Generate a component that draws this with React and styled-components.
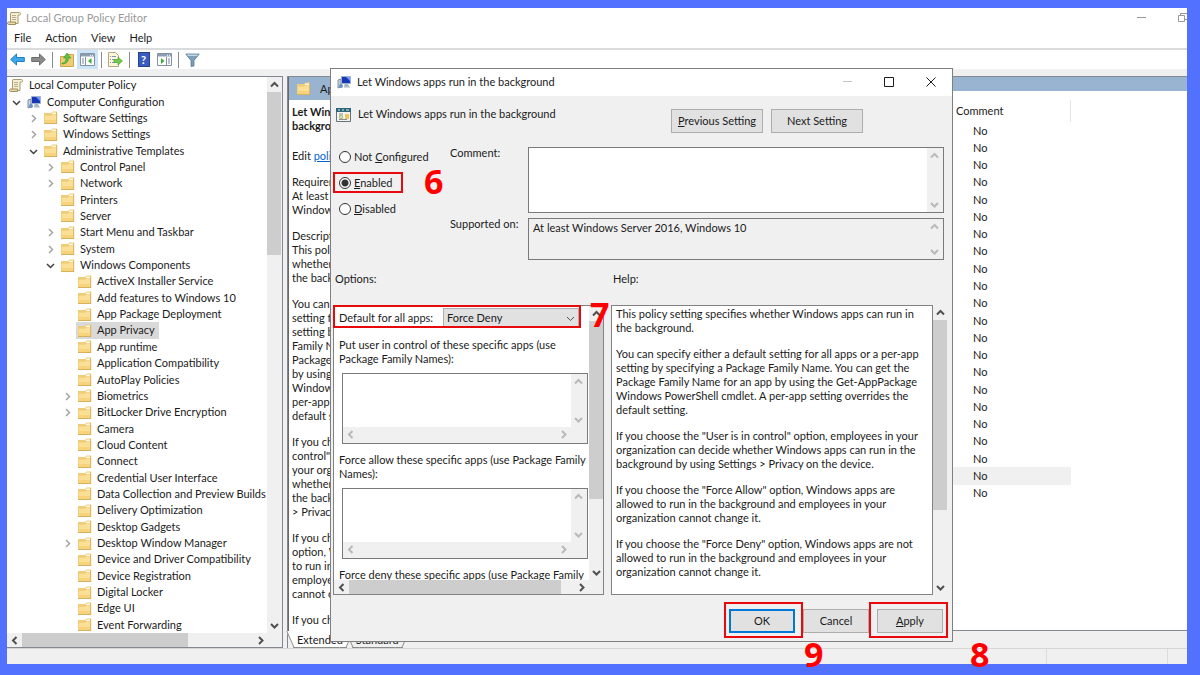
import React from "react";
import styled, { createGlobalStyle, css } from "styled-components";

const GlobalStyle = createGlobalStyle`
  * {
    box-sizing: border-box;
  }
  body {
    margin: 0;
    background: #5271ff;
    color: #1b1b1b;
    font-family: Lato, "Open Sans", sans-serif;
    font-size: 11px;
    line-height: 14px;
  }
  button, select, textarea {
    font: inherit;
    color: inherit;
  }
`;

/* ---------- window frame ---------- */

const Frame = styled.div`
  height: 100vh;
  min-height: 480px;
  padding: 8px 13px 11px 7px;
`;

const Window = styled.div`
  position: relative;
  display: flex;
  flex-direction: column;
  height: 100%;
  background: #f0f0f0;
`;

const TitleBar = styled.header`
  display: flex;
  align-items: center;
  gap: 4px;
  height: 20px;
  background: #fff;
  color: #999;
`;

const WindowControls = styled.div`
  display: flex;
  gap: 32px;
  margin-left: auto;
`;

const GlyphButton = styled.button`
  display: flex;
  padding: 0;
  border: 0;
  background: none;
`;

const MenuBar = styled.nav`
  display: flex;
  align-items: center;
  gap: 14px;
  height: 20px;
  padding-left: 7px;
  background: #fff;
`;

const MenuItem = styled.button`
  padding: 0;
  border: 0;
  background: none;
`;

const Toolbar = styled.div`
  display: flex;
  align-items: center;
  height: 21px;
  border-top: 2px solid #dadbdc;
  background: #fff;
`;

const ToolButton = styled.button`
  display: flex;
  align-items: center;
  justify-content: center;
  width: 21px;
  height: 19px;
  padding: 0;
  border: 0;
  background: ${p => (p.$active ? "#cce4f7" : "none")};
`;

const ToolDivider = styled.span`
  width: 1px;
  height: 16px;
  margin: 0 3px;
  background: #8c8c8c;
`;

const Panes = styled.div`
  display: flex;
  flex: 1;
  gap: 4px;
  min-height: 0;
  padding-top: 7px;
`;

const StatusBar = styled.footer`
  display: flex;
  justify-content: flex-end;
  height: 16px;
  border-top: 1px solid #d7d7d7;
`;

const StatusCell = styled.span`
  width: ${p => p.$width}px;
  border-left: 1px solid #dcdcdc;
`;

/* ---------- scroll bars ---------- */

const Bar = styled.div`
  display: flex;
  flex-direction: ${p => (p.$horizontal ? "row" : "column")};
  justify-content: space-between;
  flex: none;
  ${p => (p.$horizontal ? "height" : "width")}: ${p => p.$size}px;
  padding-right: ${p => (p.$horizontal ? p.$size : 0)}px;
  background: #f0f0f0;
`;

const BarArrow = styled.span`
  display: flex;
  align-items: center;
  justify-content: center;
  flex: none;
  width: 15px;
  height: 15px;
  color: ${p => (p.$muted ? "#b9b9b9" : "#505050")};
`;

const Track = styled.span`
  display: flex;
  flex: 1;
  flex-direction: inherit;
  min-height: 0;
`;

const Thumb = styled.span`
  flex: none;
  align-self: stretch;
  flex-basis: ${p => p.$length};
  background: #cdcdcd;
`;

const CHEVRONS = {
  up: "M1 6.5 4.5 3 8 6.5",
  down: "M1 3 4.5 6.5 8 3",
  left: "M6.5 1 3 4.5 6.5 8",
  right: "M3 1 6.5 4.5 3 8"
};

const Chevron = ({ to, weight = 2 }) => (
  <svg width="9" height="9" viewBox="0 0 9 9" fill="none" aria-hidden="true">
    <path d={CHEVRONS[to]} stroke="currentColor" strokeWidth={weight} />
  </svg>
);

const ScrollBar = ({ horizontal, thumb, size = 14, muted }) => (
  <Bar $horizontal={horizontal} $size={size} aria-hidden="true">
    <BarArrow $muted={muted}>
      <Chevron to={horizontal ? "left" : "up"} />
    </BarArrow>
    <Track>{thumb && <Thumb $length={thumb} />}</Track>
    <BarArrow $muted={muted}>
      <Chevron to={horizontal ? "right" : "down"} />
    </BarArrow>
  </Bar>
);

/* ---------- icons ---------- */

const FolderIcon = () => (
  <svg width="14" height="13" viewBox="0 0 14 13" aria-hidden="true">
    <path d="M0 2h7l1.500-1.500H13V13H0z" fill="#efcd78" />
    <path d="M8.500 1.500h3.800v1.600H7.500z" fill="#fff9e4" />
    <path d="M.8 4.800H7l1.500-1.300h4V12H.8z" fill="#fbdf96" />
    <path d="M.8 9h11.700v3H.8z" fill="#f7d47c" />
    <path d="M0 12.500h13M12.700 1v12" stroke="#d0aa58" strokeWidth=".8" />
  </svg>
);

const ScrollIcon = () => (
  <svg width="15" height="15" viewBox="0 0 15 15" aria-hidden="true">
    <path d="M4 1.500h8.500c1.500 0 1.500 2.500 0 2.500H11v8.500H3.500V3z" fill="#f7efd2" stroke="#a89a70" />
    <path d="M1.500 11h7v2.500h-7c-1.300 0-1.300-2.500 0-2.500z" fill="#e8d9a8" stroke="#a08f5f" />
    <path d="M5 4.500h4M5 6.500h4M5 8.500h4" stroke="#b9ad8a" />
  </svg>
);

const ComputerIcon = () => (
  <svg width="15" height="14" viewBox="0 0 15 14" aria-hidden="true">
    <path d="M1 5l3-1v8l-3 1z" fill="#c8d2dc" stroke="#7f8fa0" />
    <path d="M4.500 1.500h9v7h-9z" fill="#1736b8" stroke="#9fb2cf" />
    <path d="M9 2h4v4z" fill="#6f9cf0" />
    <path d="M7.500 9h3.500l2 3.500H7z" fill="#a9b6c6" />
    <circle cx="4" cy="11" r="2" fill="#6b8fc4" />
  </svg>
);

const PolicyIcon = () => (
  <svg width="15" height="15" viewBox="0 0 15 15" aria-hidden="true">
    <path d="M.5 1.500h14v13H.5z" fill="#f4f4ee" stroke="#64737f" />
    <path d="M0 1h15v4H0z" fill="#2d6478" />
    <path d="M2 3h2M6 3h2M10 3h3" stroke="#dfeef5" />
    <path d="M3 7h4M3 12.500h8" stroke="#8b8b8b" />
    <circle cx="5" cy="10" r="2.200" fill="#a8bf8d" />
    <circle cx="5" cy="10" r=".8" fill="#fff" />
    <path d="M9 7h4v5H9z" fill="#ecc55c" />
  </svg>
);

const ArrowIcon = ({ color, edge, flip }) => (
  <svg width="15" height="13" viewBox="0 0 15 13" aria-hidden="true">
    <path
      d={flip ? "M14.300 6.500 8.500 1v3.500H.7v4h7.800V12z" : "M.7 6.500 6.500 1v3.500h7.800v4H6.500V12z"}
      fill={color}
      stroke={edge}
    />
  </svg>
);

const FolderUpIcon = () => (
  <svg width="14" height="15" viewBox="0 0 14 15" aria-hidden="true">
    <path d="M.5 4.500h5l1-2h7v12H.5z" fill="#f0cd74" stroke="#cda64b" />
    <path d="M2 11c3 0 4-2 4-5H3.500L7 1l4 5H8.500c0 4-2.500 6-6.500 6z" fill="#5fc244" stroke="#3b962a" strokeWidth=".6" />
  </svg>
);

const TreePaneIcon = () => (
  <svg width="15" height="13" viewBox="0 0 15 13" aria-hidden="true">
    <path d="M.5.5h14v12H.5z" fill="#fff" stroke="#8592a3" />
    <path d="M1 1h13v2.500H1z" fill="#8d9db2" />
    <path d="M10 2.300h1M12 2.300h1" stroke="#fff" />
    <path d="M5.500 4v8" stroke="#8592a3" />
    <path d="M2 6h2M2 8h2M2 10h2" stroke="#7587a0" />
    <path d="M11.500 5v6L8 8z" fill="#3fae3a" />
  </svg>
);

const ActionPaneIcon = () => (
  <svg width="15" height="13" viewBox="0 0 15 13" aria-hidden="true">
    <path d="M.5.5h14v12H.5z" fill="#fff" stroke="#8592a3" />
    <path d="M1 1h13v2.500H1z" fill="#8d9db2" />
    <path d="M10 2.300h1M12 2.300h1" stroke="#fff" />
    <path d="M9.500 4v8" stroke="#8592a3" />
    <path d="M11 6h2M11 8h2M11 10h2" stroke="#7587a0" />
    <path d="M4 5v6l3.500-3z" fill="#3fae3a" />
  </svg>
);

const ExportIcon = () => (
  <svg width="15" height="15" viewBox="0 0 15 15" aria-hidden="true">
    <path d="M.5.5h7l3 3v11H.5z" fill="#fdf6df" stroke="#b7a878" />
    <path d="M2 4.500h1M4 4.500h4M2 7.500h1M4 7.500h3M2 10.500h1M4 10.500h3" stroke="#7f93b5" />
    <path d="M6 7.500h4V5l4.500 4-4.500 4v-2.500H6z" fill="#6fca45" stroke="#459c2c" strokeWidth=".6" />
  </svg>
);

const HelpBadge = styled.span`
  width: 12px;
  height: 15px;
  border: 1px solid #27408f;
  background: #3a5bc0;
  color: #fff;
  font-weight: 700;
  line-height: 13px;
  text-align: center;
`;

const FilterIcon = () => (
  <svg width="15" height="14" viewBox="0 0 15 14" aria-hidden="true">
    <path d="M.8 1h13.400L9 7.500V13l-3 .4V7.500z" fill="#7d9fb8" stroke="#5b7a92" strokeWidth=".8" />
    <path d="M2 1.500h11l-1 1.500H3z" fill="#c2d7e6" />
  </svg>
);

const MinimizeIcon = () => (
  <svg width="9" height="11" viewBox="0 0 9 11" aria-hidden="true">
    <path d="M0 4.500h9" stroke="currentColor" />
  </svg>
);

const MaximizeIcon = () => (
  <svg width="10" height="10" viewBox="0 0 10 10" fill="none" aria-hidden="true">
    <path d="M.5.5h9v9h-9z" stroke="currentColor" />
  </svg>
);

const CloseIcon = () => (
  <svg width="10" height="10" viewBox="0 0 10 10" fill="none" aria-hidden="true">
    <path d="M.5.5l9 9M9.500.5l-9 9" stroke="currentColor" />
  </svg>
);

const RestoreIcon = () => (
  <svg width="9" height="10" viewBox="0 0 9 10" fill="none" aria-hidden="true">
    <path d="M.5 2.500h6v6h-6zM2.500 2V.5H9M6.500 6.500H9" stroke="currentColor" />
  </svg>
);

/* ---------- tree ---------- */

const TreePane = styled.section`
  display: flex;
  flex: none;
  flex-direction: column;
  width: 276px;
  border: 1px solid #828790;
  border-left: 0;
`;

const TreeView = styled.div`
  display: flex;
  flex: 1;
  min-height: 0;
  padding-right: 1px;
`;

const TreeViewport = styled.div`
  display: flex;
  flex: 1;
  overflow: hidden;
  background: #fff;
`;

const TreeList = styled.ul`
  display: grid;
  flex: 1;
  grid-auto-rows: 1fr;
  margin: 0;
  padding: 0;
  list-style: none;
`;

const TreeRow = styled.li`
  display: flex;
  min-height: 0;
  padding-left: ${p => Math.max(p.$level - 1, 0) * 17}px;
  white-space: nowrap;
`;

const Twisty = styled.span`
  display: flex;
  align-items: center;
  justify-content: center;
  width: 18px;
  padding-top: 1px;
  color: ${p => (p.$open ? "#404040" : "#a6a6a6")};
`;

const TreeLabel = styled.span`
  display: flex;
  align-items: center;
  gap: 5px;
  padding: 0 4px 0 2px;
  background: ${p => (p.$selected ? "#d9d9d9" : "none")};
`;

const TREE = [
  [0, "Local Computer Policy", "", ScrollIcon],
  [1, "Computer Configuration", "open", ComputerIcon],
  [2, "Software Settings", "closed"],
  [2, "Windows Settings", "closed"],
  [2, "Administrative Templates", "open"],
  [3, "Control Panel", "closed"],
  [3, "Network", "closed"],
  [3, "Printers"],
  [3, "Server"],
  [3, "Start Menu and Taskbar", "closed"],
  [3, "System", "closed"],
  [3, "Windows Components", "open"],
  [4, "ActiveX Installer Service"],
  [4, "Add features to Windows 10"],
  [4, "App Package Deployment"],
  [4, "App Privacy"],
  [4, "App runtime"],
  [4, "Application Compatibility"],
  [4, "AutoPlay Policies"],
  [4, "Biometrics", "closed"],
  [4, "BitLocker Drive Encryption", "closed"],
  [4, "Camera"],
  [4, "Cloud Content"],
  [4, "Connect"],
  [4, "Credential User Interface"],
  [4, "Data Collection and Preview Builds"],
  [4, "Delivery Optimization"],
  [4, "Desktop Gadgets"],
  [4, "Desktop Window Manager", "closed"],
  [4, "Device and Driver Compatibility"],
  [4, "Device Registration"],
  [4, "Digital Locker"],
  [4, "Edge UI"],
  [4, "Event Forwarding"]
];

const PolicyTree = () => (
  <TreePane>
    <TreeView>
      <TreeViewport>
        <TreeList>
          {TREE.map(([level, name, state, Icon = FolderIcon]) => (
            <TreeRow key={name} $level={level}>
              {level > 0 && (
                <Twisty $open={state === "open"}>
                  {state && <Chevron to={state === "open" ? "down" : "right"} weight={1.5} />}
                </Twisty>
              )}
              <TreeLabel $selected={name === "App Privacy"}>
                <Icon />
                {name}
              </TreeLabel>
            </TreeRow>
          ))}
        </TreeList>
      </TreeViewport>
      <ScrollBar thumb="31%" />
    </TreeView>
    <ScrollBar horizontal thumb="72%" />
  </TreePane>
);

/* ---------- details ---------- */

const DetailsPane = styled.section`
  display: flex;
  flex: 1;
  flex-direction: column;
  min-width: 0;
  border-top: 1px solid #828790;
  border-left: 1px solid #828790;
`;

const DetailsBody = styled.div`
  display: flex;
  flex: 1;
  min-height: 0;
  background: #fff;
`;

const Extended = styled.div`
  width: 190px;
  overflow: hidden;
  border-left: 1px solid #696969;
`;

const ExtendedHeader = styled.div`
  display: flex;
  align-items: center;
  gap: 9px;
  height: 23px;
  padding-left: 8px;
  background: #99b4d1;
`;

const Description = styled.div`
  display: flex;
  flex-direction: column;
  gap: 12px;
  padding: 5px 3px;
  white-space: pre;

  h2 {
    margin: 0 0 4px;
    font-size: 11px;
  }
  p {
    margin: 0;
  }
  a {
    color: #0066cc;
  }
`;

const Listing = styled.div`
  flex: 1;
  border-bottom: 1px solid #828790;
`;

const ListingHeader = styled.div`
  height: 14px;
  background: #99b4d1;
`;

const SettingsTable = styled.table`
  width: 119px;
  height: 402px;
  margin: 9px 116px 0 auto;
  border-collapse: collapse;

  th {
    height: 22px;
    padding: 0 4px;
    border-right: 1px solid #e5e5e5;
    font-weight: 400;
    text-align: left;
  }
  td {
    padding: 0 21px;
  }
`;

const SettingRow = styled.tr`
  background: ${p => (p.$selected ? "#f0f0f0" : "none")};
`;

const Tabs = styled.div`
  display: flex;
  height: 17px;
  padding-left: 5px;
`;

const Tab = styled.button`
  position: relative;
  isolation: isolate;
  margin-right: 5px;
  padding: 2px 4px 0;
  border: 0;
  border-bottom: 1px solid #8c8c8c;
  background: ${p => (p.$active ? "#fff" : "#f0f0f0")};

  &::before,
  &::after {
    content: "";
    position: absolute;
    top: 0;
    bottom: -1px;
    width: 6px;
    border: 0 solid #8c8c8c;
    border-bottom-width: 1px;
    background: inherit;
    z-index: -1;
  }
  &::before {
    left: -3px;
    border-left-width: 1px;
    transform: skewX(24deg);
  }
  &::after {
    right: -3px;
    border-right-width: 1px;
    transform: skewX(-24deg);
  }
`;

const HELP = [
  "This policy setting specifies whether Windows apps can run in\nthe background.",
  "You can specify either a default setting for all apps or a per-app\nsetting by specifying a Package Family Name. You can get the\nPackage Family Name for an app by using the Get-AppPackage\nWindows PowerShell cmdlet. A per-app setting overrides the\ndefault setting.",
  "If you choose the \"User is in control\" option, employees in your\norganization can decide whether Windows apps can run in the\nbackground by using Settings > Privacy on the device.",
  "If you choose the \"Force Allow\" option, Windows apps are\nallowed to run in the background and employees in your\norganization cannot change it.",
  "If you choose the \"Force Deny\" option, Windows apps are not\nallowed to run in the background and employees in your\norganization cannot change it."
];

const DESCRIPTION = [
  "Requirements:\nAt least Windows Server 2016,\nWindows 10",
  "Description:\nThis policy setting specifies\nwhether Windows apps can run in\nthe background.",
  "You can specify either a default\nsetting for all apps or a per-app\nsetting by specifying a Package\nFamily Name. You can get the\nPackage Family Name for an app\nby using the Get-AppPackage\nWindows PowerShell cmdlet. A\nper-app setting overrides the\ndefault setting.",
  "If you choose the \"User is in\ncontrol\" option, employees in\nyour organization can decide\nwhether Windows apps can run in\nthe background by using Settings\n> Privacy on the device.",
  "If you choose the \"Force Allow\"\noption, Windows apps are allowed\nto run in the background and\nemployees in your organization\ncannot change it.",
  "If you choose the \"Force Deny\""
];

const Details = () => (
  <DetailsPane>
    <DetailsBody>
      <Extended>
        <ExtendedHeader>
          <FolderIcon />
          App Privacy
        </ExtendedHeader>
        <Description>
          <h2>{"Let Windows apps run in the\nbackground"}</h2>
          <p>
            Edit <a href="#policy">policy setting</a>
          </p>
          {DESCRIPTION.map(text => (
            <p key={text}>{text}</p>
          ))}
        </Description>
      </Extended>
      <Listing>
        <ListingHeader />
        <SettingsTable>
          <thead>
            <tr>
              <th scope="col">Comment</th>
            </tr>
          </thead>
          <tbody>
            {Array.from({ length: 22 }, (_, i) => (
              <SettingRow key={i} $selected={i === 20}>
                <td>No</td>
              </SettingRow>
            ))}
          </tbody>
        </SettingsTable>
      </Listing>
    </DetailsBody>
    <Tabs>
      <Tab $active>Extended</Tab>
      <Tab>Standard</Tab>
    </Tabs>
  </DetailsPane>
);

/* ---------- dialog ---------- */

const DialogWindow = styled.div`
  position: absolute;
  inset: 60px 234px 22px 323px;
  display: flex;
  flex-direction: column;
  border: 1px solid #7f7f7f;
  background: #f0f0f0;
`;

const DialogTitle = styled.header`
  display: flex;
  align-items: center;
  gap: 5px;
  height: 27px;
  padding: 0 16px 1px 6px;
  background: #fff;
`;

const DialogControls = styled.div`
  display: flex;
  align-items: center;
  gap: 32px;
  margin-left: auto;

  button:disabled {
    color: #c4c4c4;
  }
`;

const SettingHeader = styled.div`
  display: flex;
  justify-content: space-between;
  padding: 11px 89px 14px 5px;
`;

const SettingName = styled.div`
  display: flex;
  gap: 7px;
`;

const PushButton = styled.button`
  width: ${p => (p.$wide ? 92 : 66)}px;
  height: 24px;
  padding: 0;
  border: ${p => (p.$default ? "2px solid #0078d7" : "1px solid #adadad")};
  background: #e1e1e1;
  white-space: nowrap;
`;

const SettingNav = styled.div`
  display: flex;
  gap: 8px;
  padding-top: 2px;
`;

const StateForm = styled.div`
  display: grid;
  grid-template-columns: 111px 78px 1fr;
  grid-template-rows: 66px 42px;
  row-gap: 5px;
  padding: 0 8px;
`;

const FieldLabel = styled.label`
  margin-top: -1px;
`;

const RadioGroup = styled.fieldset`
  display: flex;
  flex-direction: column;
  align-items: flex-start;
  grid-row: span 2;
  gap: 6px;
  min-width: 0;
  margin: 0;
  padding: 0;
  border: 0;
`;

const RadioLabel = styled.label`
  position: relative;
  display: flex;
  align-items: center;
  gap: 3px;
  height: 20px;
  white-space: nowrap;
`;

const Radio = styled.input`
  width: 12px;
  height: 12px;
  margin: 0;
  border: 1px solid #333;
  border-radius: 50%;
  background: #fff;
  appearance: none;

  &:checked {
    border-color: #333;
    background: radial-gradient(#333 3px, #fff 4px);
  }
`;

const TextBox = styled.div`
  display: flex;
  flex-direction: column;
  border: 1px solid #7a7a7a;
  background: ${p => (p.$readOnly ? "#f0f0f0" : "#fff")};
`;

const TextBoxRow = styled.div`
  display: flex;
  flex: 1;
  min-height: 0;
`;

const TextInput = styled.textarea`
  flex: 1;
  min-width: 0;
  padding: 2px 4px;
  border: 0;
  background: none;
  outline: 0;
  overflow: hidden;
  resize: none;
`;

const Columns = styled.div`
  display: grid;
  flex: 1;
  grid-template-columns: minmax(0, 271fr) minmax(0, 336fr);
  grid-template-rows: 45px minmax(0, 1fr);
  column-gap: 7px;
  min-height: 0;
  padding: 0 5px 0 2px;
`;

const ColumnTitle = styled.div`
  padding: 12px 2px;
`;

const OptionsPanel = styled.div`
  position: relative;
  display: flex;
  flex-direction: column;
  min-height: 0;
  border: 1px solid #828282;
`;

const OptionsView = styled.div`
  display: flex;
  flex: 1;
  min-height: 0;
`;

const OptionsContent = styled.div`
  flex: 1;
  min-width: 0;
  overflow: hidden;
  padding: 1px 1px 0 5px;
  background: #fff;
  white-space: pre;
`;

const SelectField = styled.div`
  display: flex;
  align-items: center;
  justify-content: space-between;
  height: 22px;
  padding-right: 9px;
`;

const SelectBox = styled.div`
  position: relative;
  width: 136px;

  select {
    display: block;
    width: 100%;
    height: 20px;
    padding: 0 3px;
    border: 1px solid #adadad;
    border-radius: 0;
    background: #e1e1e1;
    appearance: none;
  }
  svg {
    position: absolute;
    top: 6px;
    right: 4px;
    color: #555;
  }
`;

const PackageField = styled.div`
  display: flex;
  flex-direction: column;
  gap: 7px;
  margin-top: 9px;

  ${TextBox} {
    height: 71px;
    margin-left: 3px;
  }
`;

const HelpPanel = styled.div`
  display: flex;
  min-height: 0;
`;

const HelpText = styled.div`
  display: flex;
  flex: 1;
  flex-direction: column;
  gap: 12px;
  min-width: 0;
  padding: 1px 4px;
  border: 1px solid #828282;
  background: #fff;
  white-space: pre;

  p {
    margin: 0;
  }
`;

const DialogFooter = styled.footer`
  display: flex;
  justify-content: flex-end;
  gap: 8px;
  padding: 14px 9px 8px 0;
`;

const ButtonSlot = styled.div`
  position: relative;
`;

/* ---------- step markers ---------- */

const marker = css`
  position: absolute;
  pointer-events: none;
`;

const StepFrame = styled.span`
  ${marker}
  inset: ${p => p.$inset};
  border: 2px solid #e8090c;
`;

const StepNumber = styled.span`
  ${marker}
  top: ${p => p.$top}px;
  left: ${p => p.$left}px;
  color: #f00;
  font-family: "Open Sans", sans-serif;
  font-size: 34px;
  font-weight: 700;
  line-height: 34px;
`;

const PackageList = ({ id, label }) => (
  <PackageField>
    <label htmlFor={id}>{label}</label>
    <TextBox>
      <TextBoxRow>
        <TextInput id={id} />
        <ScrollBar size={16} muted />
      </TextBoxRow>
      <ScrollBar horizontal size={16} muted />
    </TextBox>
  </PackageField>
);

const PolicyDialog = () => (
  <DialogWindow role="dialog" aria-labelledby="dialog-title">
    <DialogTitle>
      <ComputerIcon />
      <span id="dialog-title">Let Windows apps run in the background</span>
      <DialogControls>
        <GlyphButton aria-label="Minimize" disabled>
          <MinimizeIcon />
        </GlyphButton>
        <GlyphButton aria-label="Maximize">
          <MaximizeIcon />
        </GlyphButton>
        <GlyphButton aria-label="Close">
          <CloseIcon />
        </GlyphButton>
      </DialogControls>
    </DialogTitle>

    <SettingHeader>
      <SettingName>
        <PolicyIcon />
        Let Windows apps run in the background
      </SettingName>
      <SettingNav>
        <PushButton $wide>
          <u>P</u>revious Setting
        </PushButton>
        <PushButton $wide>Next Setting</PushButton>
      </SettingNav>
    </SettingHeader>

    <StateForm>
      <RadioGroup aria-label="Setting state">
        <RadioLabel>
          <Radio type="radio" name="state" />
          <span>
            Not <u>C</u>onfigured
          </span>
        </RadioLabel>
        <RadioLabel>
          <Radio type="radio" name="state" defaultChecked />
          <span>
            <u>E</u>nabled
          </span>
          <StepFrame $inset="-1px -10px 0 -6px" />
          <StepNumber $top={-9} $left={85}>
            6
          </StepNumber>
        </RadioLabel>
        <RadioLabel>
          <Radio type="radio" name="state" />
          <span>
            <u>D</u>isabled
          </span>
        </RadioLabel>
      </RadioGroup>
      <FieldLabel htmlFor="comment">Comment:</FieldLabel>
      <TextBox>
        <TextBoxRow>
          <TextInput id="comment" />
          <ScrollBar size={16} muted />
        </TextBoxRow>
      </TextBox>
      <FieldLabel htmlFor="supported">Supported on:</FieldLabel>
      <TextBox $readOnly>
        <TextBoxRow>
          <TextInput id="supported" readOnly value="At least Windows Server 2016, Windows 10" />
          <ScrollBar size={16} muted />
        </TextBoxRow>
      </TextBox>
    </StateForm>

    <Columns>
      <ColumnTitle>Options:</ColumnTitle>
      <ColumnTitle>Help:</ColumnTitle>
      <OptionsPanel>
        <OptionsView>
          <OptionsContent>
            <SelectField>
              <label htmlFor="default-rule">Default for all apps:</label>
              <SelectBox>
                <select id="default-rule" defaultValue="deny">
                  <option value="deny">Force Deny</option>
                </select>
                <Chevron to="down" weight={1} />
              </SelectBox>
            </SelectField>
            <PackageList
              id="user-control"
              label={"Put user in control of these specific apps (use\nPackage Family Names):"}
            />
            <PackageList
              id="force-allow"
              label={"Force allow these specific apps (use Package Family\nNames):"}
            />
            <PackageField>Force deny these specific apps (use Package Family</PackageField>
          </OptionsContent>
          <ScrollBar thumb="73%" />
        </OptionsView>
        <ScrollBar horizontal thumb="94%" />
        <StepFrame $inset="-1px 22px 266px -1px" />
        <StepNumber $top={-9} $left={256}>
          7
        </StepNumber>
      </OptionsPanel>
      <HelpPanel>
        <HelpText>
          {HELP.map(text => (
            <p key={text}>{text}</p>
          ))}
        </HelpText>
        <ScrollBar thumb="73%" />
      </HelpPanel>
    </Columns>

    <DialogFooter>
      <ButtonSlot>
        <PushButton $default>OK</PushButton>
        <StepFrame $inset="-7px -8px -5px -5px" />
        <StepNumber $top={28} $left={75}>
          9
        </StepNumber>
      </ButtonSlot>
      <PushButton>Cancel</PushButton>
      <ButtonSlot>
        <PushButton>
          <u>A</u>pply
        </PushButton>
        <StepFrame $inset="-7px -5px -5px -8px" />
        <StepNumber $top={28} $left={93}>
          8
        </StepNumber>
      </ButtonSlot>
    </DialogFooter>
  </DialogWindow>
);

const App = () => (
  <>
    <GlobalStyle />
    <Frame>
      <Window>
        <TitleBar>
          <ScrollIcon />
          Local Group Policy Editor
          <WindowControls>
            <GlyphButton aria-label="Minimize window">
              <MinimizeIcon />
            </GlyphButton>
            <GlyphButton aria-label="Restore window">
              <RestoreIcon />
            </GlyphButton>
          </WindowControls>
        </TitleBar>
        <MenuBar>
          {["File", "Action", "View", "Help"].map(name => (
            <MenuItem key={name}>{name}</MenuItem>
          ))}
        </MenuBar>
        <Toolbar>
          <ToolButton aria-label="Back">
            <ArrowIcon color="#3fa9e8" edge="#1f7fc0" />
          </ToolButton>
          <ToolButton aria-label="Forward">
            <ArrowIcon color="#8b8b8b" edge="#6a6a6a" flip />
          </ToolButton>
          <ToolDivider />
          <ToolButton aria-label="Up one level">
            <FolderUpIcon />
          </ToolButton>
          <ToolButton aria-label="Show or hide console tree" $active>
            <TreePaneIcon />
          </ToolButton>
          <ToolDivider />
          <ToolButton aria-label="Export list">
            <ExportIcon />
          </ToolButton>
          <ToolDivider />
          <ToolButton aria-label="Help">
            <HelpBadge>?</HelpBadge>
          </ToolButton>
          <ToolButton aria-label="Show or hide action pane">
            <ActionPaneIcon />
          </ToolButton>
          <ToolDivider />
          <ToolButton aria-label="Filter">
            <FilterIcon />
          </ToolButton>
        </Toolbar>
        <Panes>
          <PolicyTree />
          <Details />
        </Panes>
        <StatusBar>
          <StatusCell $width={121} />
          <StatusCell $width={20} />
        </StatusBar>
        <PolicyDialog />
      </Window>
    </Frame>
  </>
);

export default App;
